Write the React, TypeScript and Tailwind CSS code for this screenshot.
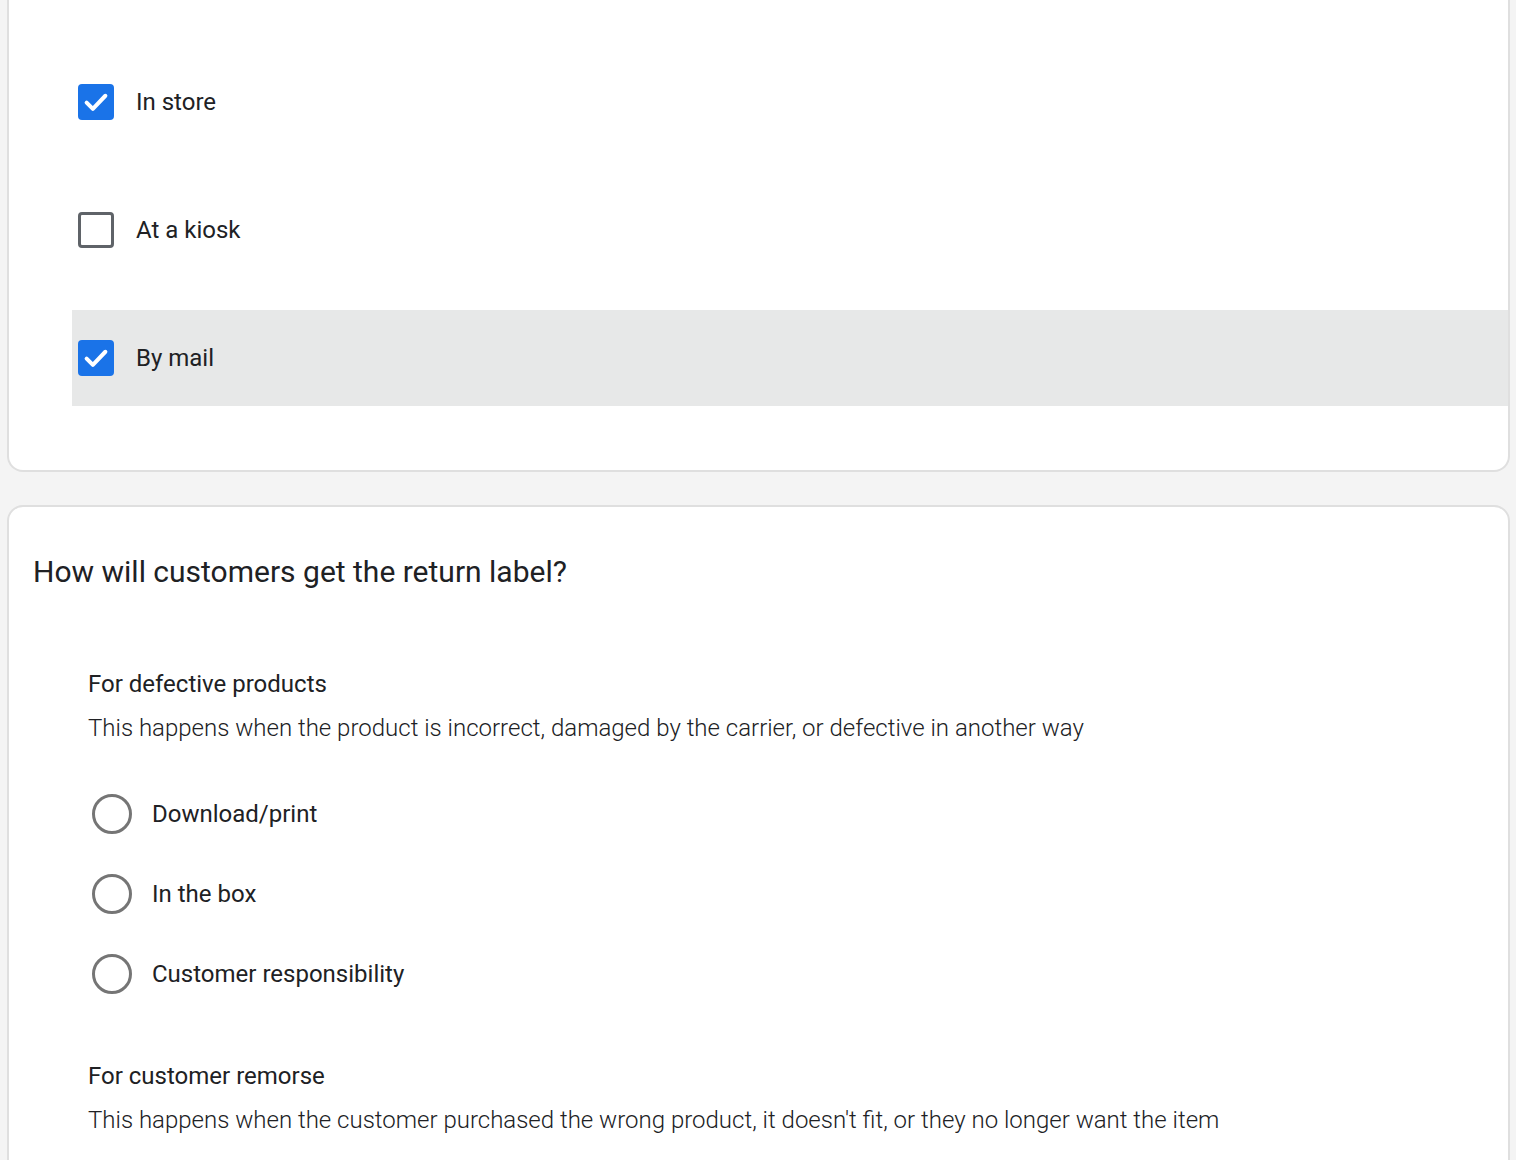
import React, { useState } from 'react';

const font = { fontFamily: 'Roboto, "Noto Sans", Arial, sans-serif' };

const CheckRow: React.FC<{ label: string; checked: boolean; hovered?: boolean; onToggle: () => void }> = ({ label, checked, hovered, onToggle }) => (
  <button
    onClick={onToggle}
    className={`flex h-[96px] w-full items-center gap-[22px] pl-[6px] text-left ${hovered ? 'bg-[#e7e8e8]' : 'bg-white'}`}
  >
    {checked ? (
      <span className="flex h-[36px] w-[36px] items-center justify-center rounded-[4px] bg-[#1a73e8]">
        <svg viewBox="0 0 24 24" className="h-[30px] w-[30px]" fill="none" stroke="white" strokeWidth="3.2" strokeLinecap="round" strokeLinejoin="round">
          <path d="M4.5 12.5l5 5L19.5 7" />
        </svg>
      </span>
    ) : (
      <span className="h-[36px] w-[36px] rounded-[4px] border-[3.5px] border-[#5f6368] bg-white" />
    )}
    <span className="text-[24px] text-[#202124]">{label}</span>
  </button>
);

const RadioRow: React.FC<{ label: string; selected: boolean; onSelect: () => void }> = ({ label, selected, onSelect }) => (
  <button onClick={onSelect} className="flex h-[80px] items-center gap-[20px] pl-[4px] text-left">
    <span className={`flex h-[40px] w-[40px] items-center justify-center rounded-full border-[3.5px] ${selected ? 'border-[#1a73e8]' : 'border-[#757575]'}`}>
      {selected && <span className="h-[20px] w-[20px] rounded-full bg-[#1a73e8]" />}
    </span>
    <span className="text-[24px] text-[#202124]">{label}</span>
  </button>
);

export default function App() {
  const [methods, setMethods] = useState<Record<string, boolean>>({ 'In store': true, 'At a kiosk': false, 'By mail': true });
  const [defective, setDefective] = useState<string | null>(null);

  const toggle = (k: string) => setMethods(m => ({ ...m, [k]: !m[k] }));

  return (
    <div className="min-h-screen bg-[#f4f4f4] pb-10 pl-[7px] pr-[6px]" style={font}>
      <div className="rounded-b-[16px] border-x-2 border-b-2 border-[#dfdfdf] bg-white pb-[64px] pl-[63px] pt-[54px]">
        <div className="flex flex-col gap-[32px]">
          <CheckRow label="In store" checked={methods['In store']} onToggle={() => toggle('In store')} />
          <CheckRow label="At a kiosk" checked={methods['At a kiosk']} onToggle={() => toggle('At a kiosk')} />
          <CheckRow label="By mail" checked={methods['By mail']} hovered onToggle={() => toggle('By mail')} />
        </div>
      </div>

      <div className="mt-[33px] rounded-[16px] border-2 border-[#dfdfdf] bg-white pb-[80px] pl-[24px] pt-[47px]">
        <h2 className="text-[30px] leading-[36px] text-[#202124]">How will customers get the return label?</h2>

        <div className="mt-[78px] pl-[55px]">
          <div className="text-[24px] leading-[32px] text-[#202124]">For defective products</div>
          <div className="mt-[12px] text-[24px] font-light leading-[32px] text-[#202124]">
            This happens when the product is incorrect, damaged by the carrier, or defective in another way
          </div>
          <div className="mt-[30px] flex flex-col">
            {['Download/print', 'In the box', 'Customer responsibility'].map(o => (
              <RadioRow key={o} label={o} selected={defective === o} onSelect={() => setDefective(o)} />
            ))}
          </div>

          <div className="mt-[46px] text-[24px] leading-[32px] text-[#202124]">For customer remorse</div>
          <div className="mt-[12px] text-[24px] font-light leading-[32px] text-[#202124]">
            This happens when the customer purchased the wrong product, it doesn't fit, or they no longer want the item
          </div>
        </div>
      </div>
    </div>
  );
}
